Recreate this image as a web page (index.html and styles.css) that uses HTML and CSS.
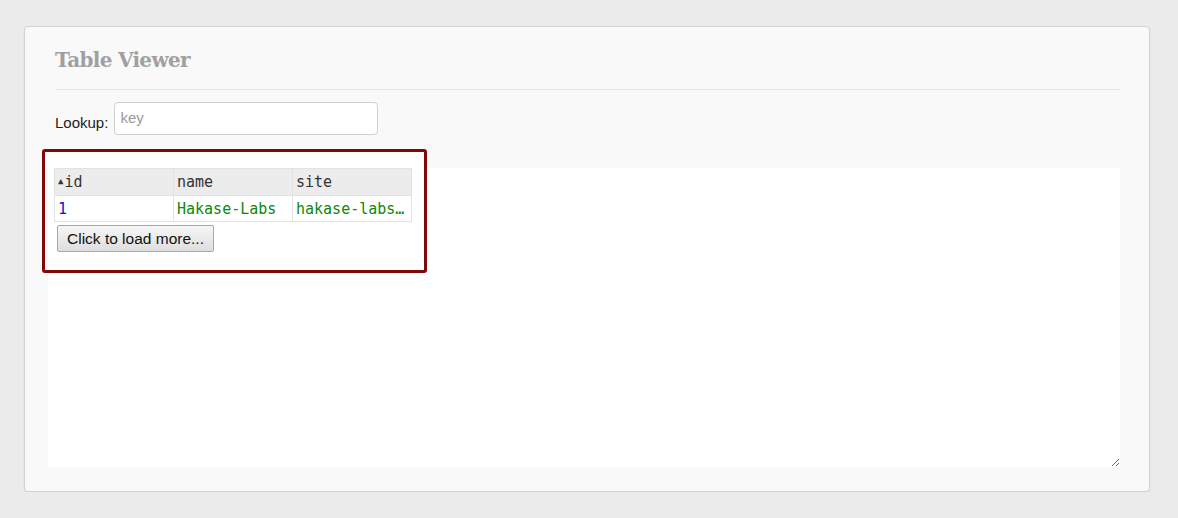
FILE: index.html
```html
<!DOCTYPE html>
<html>
<head>
<meta charset="utf-8">
<link rel="stylesheet" href="styles.css">
</head>
<body>
<div class="card">
  <h1 class="title">Table Viewer</h1>
  <hr class="rule">
  <div class="lookup">
    <label class="lookup-label">Lookup:</label>
    <input class="lookup-input" type="text" placeholder="key">
  </div>
  <div class="panel">
    <table class="grid">
      <thead>
        <tr><th><span class="sort">&#9650;</span>id</th><th>name</th><th>site</th></tr>
      </thead>
      <tbody>
        <tr><td class="num">1</td><td class="str">Hakase-Labs</td><td class="str">hakase-labs.io</td></tr>
      </tbody>
    </table>
    <button class="more">Click to load more...</button>
  </div>
  <div class="highlight"></div>
</div>
</body>
</html>
```
FILE: styles.css
```css
html, body {
  margin: 0;
  padding: 0;
  background: #ebebeb;
  font-family: "Liberation Sans", Arial, sans-serif;
}
.card {
  position: relative;
  box-sizing: border-box;
  margin: 26px 28px 0 24px;
  height: 466px;
  padding: 18px 29px 0 30px;
  background: #f9f9f9;
  border: 1px solid #d3d3d3;
  border-radius: 4px;
  box-shadow: 0 1px 2px rgba(0,0,0,0.08);
}
.title {
  margin: 0;
  font-family: "DejaVu Serif", serif;
  font-weight: bold;
  font-size: 20px;
  line-height: 30px;
  color: #a0a0a0;
  letter-spacing: -0.7px;
}
.rule {
  margin: 14px 0 0 0;
  border: 0;
  border-top: 1px solid #e6e6e6;
  height: 0;
}
.lookup {
  margin-top: 12px;
  display: flex;
  align-items: flex-end;
  gap: 6px;
}
.lookup-label {
  font-size: 15px;
  color: #222;
  line-height: 18px;
  padding-bottom: 3px;
}
.lookup-input {
  box-sizing: border-box;
  width: 264px;
  height: 33px;
  margin: 0;
  border: 1px solid #cfcfcf;
  border-radius: 4px;
  background: #fff;
  padding: 0 5px 3px;
  font-family: "Liberation Sans", Arial, sans-serif;
  font-size: 15px;
  outline: none;
}
.lookup-input::placeholder {
  color: #9a9a9a;
}
.panel {
  box-sizing: border-box;
  margin: 33px 0 0 -7px;
  height: 299px;
  background: #fff;
  padding: 0 6px;
  overflow: auto;
  resize: vertical;
}
.grid {
  border-collapse: collapse;
  table-layout: fixed;
  width: 358px;
  font-family: "DejaVu Sans Mono", monospace;
  font-size: 15px;
}
.grid th, .grid td {
  box-sizing: border-box;
  width: 119px;
  border: 1px solid #e2e2e2;
  padding: 0 3px;
  text-align: left;
  font-weight: normal;
  white-space: nowrap;
  overflow: hidden;
  text-overflow: ellipsis;
}
.grid th {
  height: 27px;
  background: #ececec;
  color: #333;
}
.grid td {
  height: 26px;
}
.sort {
  font-size: 9px;
  vertical-align: 3px;
  margin-right: 1px;
}
.num { color: #1212c8; }
.str { color: #0a8a0a; }
.more {
  margin: 3px 0 0 3px;
  height: 27px;
  padding: 0 9px;
  font-family: "Liberation Sans", Arial, sans-serif;
  font-size: 15.5px;
  color: #111;
  background: linear-gradient(#f6f6f6, #dedede);
  border: 1px solid #a8a8a8;
  border-radius: 2px;
}
.highlight {
  position: absolute;
  left: 17px;
  top: 122px;
  width: 385px;
  height: 124px;
  box-sizing: border-box;
  border: 3px solid #800808;
  border-radius: 3px;
  background: linear-gradient(#fff, #fff) top left / 100% 16px no-repeat;
  pointer-events: none;
}
```
